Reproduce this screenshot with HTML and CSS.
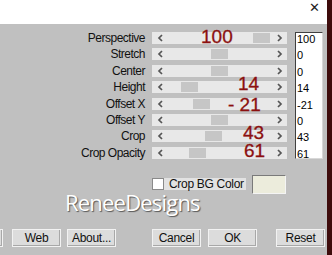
FILE: index.html
```html
<!DOCTYPE html>
<html lang="en">
<head>
    <meta charset="UTF-8">
    <meta name="viewport" content="width=device-width, initial-scale=1.0">
    <title>Perspective</title>
    <link rel="stylesheet" href="styles.css">
</head>
<body>
    <div class="window">
        <div class="dialog">
            <div class="titlebar">
                <span class="close">&#x2715;</span>
            </div>
            <div class="body">
                <div class="params">
                    <span class="label">Perspective</span>
                    <div class="slider">
                        <svg class="arrow" width="6" height="8" viewBox="0 0 6 8"><path d="M5 1 L2 4 L5 7" stroke="#555" stroke-width="1.7" fill="none"/></svg>
                        <span class="thumb" style="left: 101px"></span>
                        <span class="note note-perspective">100</span>
                        <svg class="arrow" width="6" height="8" viewBox="0 0 6 8"><path d="M1 1 L4 4 L1 7" stroke="#555" stroke-width="1.7" fill="none"/></svg>
                    </div>

                    <span class="label">Stretch</span>
                    <div class="slider">
                        <svg class="arrow" width="6" height="8" viewBox="0 0 6 8"><path d="M5 1 L2 4 L5 7" stroke="#555" stroke-width="1.7" fill="none"/></svg>
                        <span class="thumb" style="left: 59px"></span>
                        <svg class="arrow" width="6" height="8" viewBox="0 0 6 8"><path d="M1 1 L4 4 L1 7" stroke="#555" stroke-width="1.7" fill="none"/></svg>
                    </div>

                    <span class="label">Center</span>
                    <div class="slider">
                        <svg class="arrow" width="6" height="8" viewBox="0 0 6 8"><path d="M5 1 L2 4 L5 7" stroke="#555" stroke-width="1.7" fill="none"/></svg>
                        <span class="thumb" style="left: 59px"></span>
                        <svg class="arrow" width="6" height="8" viewBox="0 0 6 8"><path d="M1 1 L4 4 L1 7" stroke="#555" stroke-width="1.7" fill="none"/></svg>
                    </div>

                    <span class="label">Height</span>
                    <div class="slider">
                        <svg class="arrow" width="6" height="8" viewBox="0 0 6 8"><path d="M5 1 L2 4 L5 7" stroke="#555" stroke-width="1.7" fill="none"/></svg>
                        <span class="thumb" style="left: 29px"></span>
                        <span class="note note-height">14</span>
                        <svg class="arrow" width="6" height="8" viewBox="0 0 6 8"><path d="M1 1 L4 4 L1 7" stroke="#555" stroke-width="1.7" fill="none"/></svg>
                    </div>

                    <span class="label">Offset X</span>
                    <div class="slider">
                        <svg class="arrow" width="6" height="8" viewBox="0 0 6 8"><path d="M5 1 L2 4 L5 7" stroke="#555" stroke-width="1.7" fill="none"/></svg>
                        <span class="thumb" style="left: 41px"></span>
                        <span class="note note-offset">- 21</span>
                        <svg class="arrow" width="6" height="8" viewBox="0 0 6 8"><path d="M1 1 L4 4 L1 7" stroke="#555" stroke-width="1.7" fill="none"/></svg>
                    </div>

                    <span class="label">Offset Y</span>
                    <div class="slider">
                        <svg class="arrow" width="6" height="8" viewBox="0 0 6 8"><path d="M5 1 L2 4 L5 7" stroke="#555" stroke-width="1.7" fill="none"/></svg>
                        <span class="thumb" style="left: 59px"></span>
                        <svg class="arrow" width="6" height="8" viewBox="0 0 6 8"><path d="M1 1 L4 4 L1 7" stroke="#555" stroke-width="1.7" fill="none"/></svg>
                    </div>

                    <span class="label">Crop</span>
                    <div class="slider">
                        <svg class="arrow" width="6" height="8" viewBox="0 0 6 8"><path d="M5 1 L2 4 L5 7" stroke="#555" stroke-width="1.7" fill="none"/></svg>
                        <span class="thumb" style="left: 53px"></span>
                        <span class="note note-crop">43</span>
                        <svg class="arrow" width="6" height="8" viewBox="0 0 6 8"><path d="M1 1 L4 4 L1 7" stroke="#555" stroke-width="1.7" fill="none"/></svg>
                    </div>

                    <span class="label">Crop Opacity</span>
                    <div class="slider">
                        <svg class="arrow" width="6" height="8" viewBox="0 0 6 8"><path d="M5 1 L2 4 L5 7" stroke="#555" stroke-width="1.7" fill="none"/></svg>
                        <span class="thumb" style="left: 37px"></span>
                        <span class="note note-opacity">61</span>
                        <svg class="arrow" width="6" height="8" viewBox="0 0 6 8"><path d="M1 1 L4 4 L1 7" stroke="#555" stroke-width="1.7" fill="none"/></svg>
                    </div>

                    <div class="values">
                        <span>100</span>
                        <span>0</span>
                        <span>0</span>
                        <span>14</span>
                        <span>-21</span>
                        <span>0</span>
                        <span>43</span>
                        <span>61</span>
                    </div>
                </div>

                <div class="options">
                    <span class="checkbox"></span>
                    <span class="check-label">Crop BG Color</span>
                    <span class="swatch"></span>
                </div>

                <div class="brand">ReneeDesigns</div>

                <div class="buttons">
                    <button class="btn btn-cut"></button>
                    <button class="btn btn-web">Web</button>
                    <button class="btn btn-about">About...</button>
                    <button class="btn btn-cancel">Cancel</button>
                    <button class="btn btn-ok">OK</button>
                    <button class="btn btn-reset">Reset</button>
                </div>
            </div>
        </div>
        <div class="edge"></div>
    </div>
</body>
</html>
```

FILE: styles.css
```css
body {
    margin: 0;
    font-family: "Liberation Sans", Arial, sans-serif;
    overflow: hidden;
}
.window {
    display: grid;
    grid-template-columns: 327px 5px;
    width: 332px;
    height: 255px;
}
.dialog {
    display: flex;
    flex-direction: column;
    overflow: hidden;
}
.edge {
    background-color: #3e0c0c;
}
.titlebar {
    height: 24px;
    background-color: #ffffff;
    display: flex;
    justify-content: flex-end;
    align-items: flex-start;
}
.close {
    margin: 1px 7px 0 0;
    font-family: "DejaVu Sans", sans-serif;
    font-size: 13px;
    line-height: 14px;
    color: #222;
}
.body {
    flex: 1;
    position: relative;
    background-color: #c0c0c0;
    padding-top: 8px;
}
.params {
    display: grid;
    grid-template-columns: 145px 135px 29px;
    grid-template-rows: repeat(8, 12px);
    column-gap: 7px;
    row-gap: 4.4px;
}
.label {
    grid-column: 1;
    text-align: right;
    font-size: 12px;
    line-height: 12px;
    letter-spacing: -0.5px;
    color: #111;
}
.slider {
    grid-column: 2;
    position: relative;
    background-color: #e8e8e8;
    display: flex;
    justify-content: space-between;
    align-items: center;
    padding: 0 4px 0 5px;
}
.arrow {
    position: relative;
    z-index: 1;
}
.thumb {
    position: absolute;
    top: 1px;
    width: 17px;
    height: 10px;
    background-color: #c6c6c6;
}
.note {
    position: absolute;
    font-size: 19px;
    line-height: 19px;
    color: #8c1010;
    white-space: pre;
    -webkit-text-stroke: 0.3px #8c1010;
}
.note-perspective {
    left: 49px;
    top: -5px;
}
.note-height {
    left: 86px;
    top: -7px;
}
.note-offset {
    left: 76px;
    top: -3px;
}
.note-crop {
    left: 91px;
    top: -7px;
}
.note-opacity {
    left: 92px;
    top: -6px;
}
.values {
    grid-column: 3;
    grid-row: 1 / 9;
    margin-left: 1px;
    background-color: #ffffff;
    border: 1px solid;
    border-color: #404040 #d8d8d8 #d8d8d8 #404040;
    display: grid;
    grid-template-rows: repeat(8, 12px);
    row-gap: 4.4px;
    font-size: 11px;
    line-height: 12px;
    padding-left: 1px;
    color: #000;
}
.options {
    display: flex;
    align-items: center;
    margin-top: 16px;
    padding-left: 152px;
    height: 19px;
}
.checkbox {
    width: 10px;
    height: 10px;
    background-color: #fff;
    border: 1px solid #8a8a8a;
}
.check-label {
    background-color: #e2e2e2;
    width: 77px;
    height: 12px;
    padding-left: 5px;
    font-size: 12px;
    line-height: 12px;
    letter-spacing: -0.3px;
    color: #111;
}
.swatch {
    margin-left: 6px;
    width: 32px;
    height: 17px;
    background-color: #ececdc;
    border: 1px solid;
    border-color: #7a7a7a #f4f4f4 #f4f4f4 #7a7a7a;
}
.brand {
    position: absolute;
    left: 65px;
    top: 165px;
    font-family: "Open Sans", sans-serif;
    font-size: 22px;
    line-height: 26px;
    letter-spacing: -0.8px;
    color: #ffffff;
    text-shadow: 1px 1px 1px #555;
}
.buttons {
    display: flex;
    margin-top: 35px;
    height: 18px;
}
.btn {
    flex: none;
    width: 49px;
    height: 18px;
    margin: 0;
    padding: 0;
    background-color: #dcdcdc;
    border: 1px solid #f2f2f2;
    box-shadow: inset -1px -1px #a8a8a8;
    font-family: "Liberation Sans", Arial, sans-serif;
    font-size: 12px;
    letter-spacing: -0.3px;
    color: #111;
}
.btn-cut {
    margin-left: -46px;
}
.btn-web {
    margin-left: 9px;
}
.btn-about {
    margin-left: 6px;
}
.btn-cancel {
    margin-left: 36px;
}
.btn-ok {
    margin-left: 7px;
}
.btn-reset {
    margin-left: 19px;
}
```
